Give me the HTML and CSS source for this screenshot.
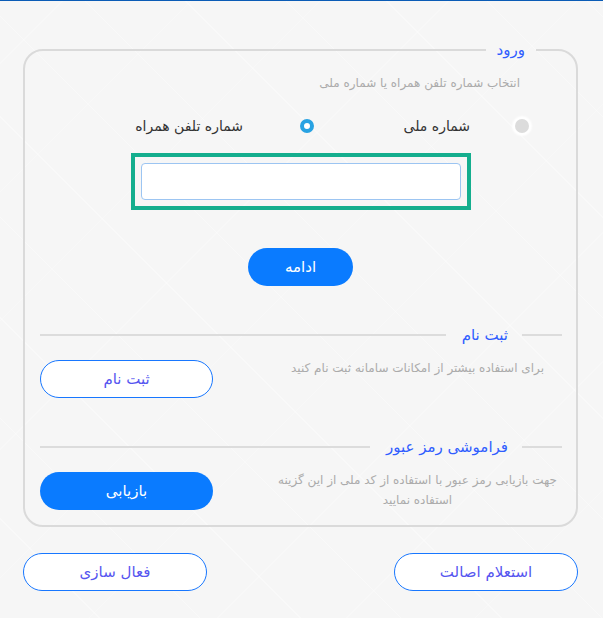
FILE: index.html
```html
<!DOCTYPE html>
<html lang="fa" dir="rtl">
<head>
  <meta charset="UTF-8">
  <meta name="viewport" content="width=device-width, initial-scale=1.0">
  <title>ورود</title>
  <link rel="stylesheet" href="styles.css">
</head>
<body>
  <div class="wrap">
    <fieldset class="login-box">
      <legend>ورود</legend>

      <p class="hint">انتخاب شماره تلفن همراه یا شماره ملی</p>

      <div class="choices">
        <label class="choice">
          <span class="radio"></span>
          <span>شماره ملی</span>
        </label>
        <label class="choice choice-wide">
          <span class="radio checked"></span>
          <span>شماره تلفن همراه</span>
        </label>
      </div>

      <div class="field-frame">
        <input type="text" class="field">
      </div>

      <div class="center">
        <button class="btn btn-fill btn-small">ادامه</button>
      </div>

      <div class="divider">
        <span class="line short"></span>
        <span class="divider-title">ثبت نام</span>
        <span class="line"></span>
      </div>
      <div class="row">
        <p class="row-text">برای استفاده بیشتر از امکانات سامانه ثبت نام کنید</p>
        <button class="btn btn-outline">ثبت نام</button>
      </div>

      <div class="divider">
        <span class="line short"></span>
        <span class="divider-title">فراموشی رمز عبور</span>
        <span class="line"></span>
      </div>
      <div class="row">
        <p class="row-text">جهت بازیابی رمز عبور با استفاده از کد ملی از این گزینه استفاده نمایید</p>
        <button class="btn btn-fill">بازیابی</button>
      </div>
    </fieldset>

    <div class="bottom">
      <button class="btn btn-outline btn-wide">استعلام اصالت</button>
      <button class="btn btn-outline btn-wide">فعال سازی</button>
    </div>
  </div>
</body>
</html>
```

FILE: styles.css
```css
html, body {
  height: 100%;
}
body {
  margin: 0;
  font-family: "DejaVu Sans", "Noto Sans", sans-serif;
  border-top: 1px solid #0b5cb6;
  background-color: #f6f6f6;
  background-image:
    repeating-linear-gradient(45deg, transparent 0, transparent 70px, rgba(255,255,255,0.35) 70px, rgba(255,255,255,0.35) 71px),
    repeating-linear-gradient(-45deg, transparent 0, transparent 90px, rgba(255,255,255,0.25) 90px, rgba(255,255,255,0.25) 91px);
  box-sizing: border-box;
}
.wrap {
  margin: 0 25px 0 23px;
  padding-top: 39px;
}
.login-box {
  margin: 0;
  padding: 0 0 15px;
  border: 2px solid #dadada;
  border-radius: 20px;
  min-width: 0;
}
.login-box legend {
  margin-right: 40px;
  padding: 0 11px;
  font-size: 15px;
  line-height: 20px;
  color: #2f5dff;
}
.hint {
  margin: 13px 56px 0 0;
  font-size: 12px;
  line-height: 20px;
  color: #ababab;
}
.choices {
  display: flex;
  margin: 23px 47px 0 0;
}
.choice {
  display: flex;
  align-items: center;
  gap: 45px;
  width: 215px;
  font-size: 14px;
  line-height: 20px;
  color: #333;
}
.choice-wide {
  gap: 57px;
}
.radio {
  width: 14px;
  height: 14px;
  border-radius: 50%;
  background: #dcdcdc;
  box-sizing: border-box;
  box-shadow: 0 0 2px 3px #fff;
  flex: none;
}
.radio.checked {
  background: #fff;
  border: 4px solid #28a2e2;
  box-shadow: none;
}
.field-frame {
  width: 320px;
  margin: 17px auto 0;
  padding: 6px;
  border: 4px solid #14ae8e;
}
.field {
  display: block;
  width: 100%;
  height: 37px;
  box-sizing: border-box;
  border: 1px solid #9cc5f2;
  border-radius: 4px;
  background: #fff;
}
.center {
  text-align: center;
  margin-top: 38px;
}
.btn {
  font-family: inherit;
  font-size: 15px;
  height: 38px;
  width: 173px;
  border-radius: 19px;
  cursor: pointer;
  box-sizing: border-box;
}
.btn-fill {
  background: #0a7bff;
  border: none;
  color: #fff;
}
.btn-small {
  width: 105px;
}
.btn-outline {
  background: #fff;
  border: 1px solid #1877ff;
  color: #5656f0;
}
.btn-wide {
  width: 184px;
}
.divider {
  display: flex;
  align-items: center;
  margin: 39px 14px 0 15px;
}
.line {
  flex: 1;
  height: 2px;
  background: #dcdcdc;
}
.line.short {
  flex: none;
  width: 40px;
}
.divider-title {
  padding: 0 14px 0 16px;
  font-size: 15px;
  line-height: 20px;
  color: #2f5dff;
}
.row {
  display: flex;
  align-items: flex-start;
  gap: 60px;
  margin: 15px 14px 0 15px;
}
.row-text {
  flex: 1;
  margin: -2px 0 0;
  font-size: 12px;
  line-height: 20px;
  color: #ababab;
  text-align: center;
}
.bottom {
  display: flex;
  justify-content: space-between;
  margin-top: 26px;
}
```
